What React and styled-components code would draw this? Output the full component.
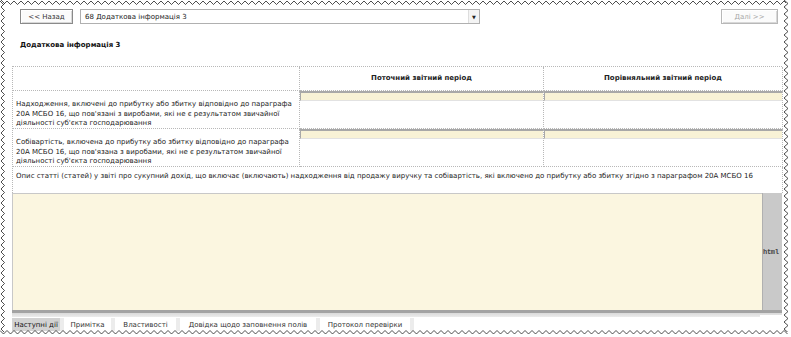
import React from "react";
import styled, { createGlobalStyle } from "styled-components";

const Global = createGlobalStyle`
  html, body { margin: 0; padding: 0; background: #fff; }
  * { box-sizing: border-box; }
`;

const FONT = `"DejaVu Sans", Verdana, Tahoma, sans-serif`;

const Page = styled.div`
  position: relative;
  width: 791px;
  height: 337px;
  overflow: hidden;
  background: #fff;
  font-family: ${FONT};
  font-size: 7px;
  color: #222;
  display: flex;
  flex-direction: column;
  padding: 9px 9px 0 12px;
`;

const Toolbar = styled.div`
  display: flex;
  align-items: center;
  height: 15px;
  padding: 0 4px 0 8px;
  gap: 7px;
`;

const NavButton = styled.div`
  width: ${(p) => p.$w}px;
  height: 15px;
  display: flex;
  align-items: center;
  justify-content: center;
  border: 1px solid ${(p) => (p.$disabled ? "#b8b8b8" : "#8a8a8a")};
  box-shadow: inset 1px 1px 0 #fff, inset -1px -1px 0 #d8d8d8;
  background: #fbfbfb;
  color: ${(p) => (p.$disabled ? "#a8a8a8" : "#333")};
  margin-left: ${(p) => (p.$push ? "auto" : "0")};
`;

const Select = styled.div`
  width: 400px;
  height: 15px;
  border: 1px solid #b0b0b0;
  display: flex;
  align-items: center;
  justify-content: space-between;
  padding-left: 4px;
  color: #222;
`;

const Arrow = styled.div`
  width: 11px;
  height: 13px;
  border-left: 1px solid #ddd;
  display: flex;
  align-items: center;
  justify-content: center;
  background: #f4f4f4;
  font-size: 5px;
  color: #222;
`;

const Title = styled.div`
  font-weight: bold;
  margin: 17px 0 0 8px;
  height: 10px;
  color: #111;
`;

const Table = styled.div`
  margin-top: 15px;
  width: 770px;
  display: grid;
  grid-template-columns: 287px 244px 239px;
  border-top: 1px dotted #b8b8b8;
  border-left: 1px dotted #b8b8b8;
`;

const Cell = styled.div`
  height: ${(p) => p.$h}px;
  border-right: 1px dotted #b8b8b8;
  border-bottom: 1px dotted #b8b8b8;
  display: flex;
  flex-direction: column;
  justify-content: ${(p) => (p.$top ? "flex-start" : "center")};
  align-items: ${(p) => (p.$center ? "center" : "flex-start")};
  font-weight: ${(p) => (p.$bold ? "bold" : "normal")};
  padding: ${(p) => (p.$pad ? p.$pad : "0 3px")};
  line-height: 9.5px;
  color: #222;
`;

const ValueCell = styled.div`
  height: ${(p) => p.$h}px;
  border-right: 1px dotted #b8b8b8;
  border-bottom: 1px dotted #b8b8b8;
`;

const Strip = styled.div`
  height: 10px;
  border-top: 2px solid #a8a8a8;
  border-left: 1px solid #a8a8a8;
  border-bottom: 1px solid #e2e2e2;
  background-color: #f8f2d6;
  background-image: radial-gradient(#efe6c0 0.5px, transparent 0.6px);
  background-size: 2px 2px;
`;

const WideCell = styled.div`
  grid-column: 1 / span 3;
  height: 26px;
  border-right: 1px dotted #b8b8b8;
  padding: 5px 3px 0 3px;
  color: #222;
  white-space: nowrap;
`;

const EditorRow = styled.div`
  display: flex;
  width: 770px;
  height: 117px;
`;

const Editor = styled.div`
  flex: 1;
  border-top: 1px solid #c8c8c8;
  border-left: 1px solid #c8c8c8;
  background-color: #fbf6e0;
  background-image: radial-gradient(#f0e8c6 0.5px, transparent 0.7px);
  background-size: 2px 2px;
`;

const SideBar = styled.div`
  width: 20px;
  background: #c9c9c9;
  border-left: 1px solid #b0b0b0;
  display: flex;
  align-items: center;
  padding-left: 0;
  font-family: "Liberation Mono", "DejaVu Sans Mono", monospace;
  font-weight: bold;
  font-size: 7px;
  letter-spacing: -0.3px;
  color: #444;
  white-space: nowrap;
`;

const BottomBar = styled.div`
  width: 770px;
  height: 3px;
  background: #a3a3a3;
`;

const BottomShade = styled.div`
  width: 770px;
  height: 4px;
  background: linear-gradient(#dadada, #ececec);
  display: flex;
  justify-content: flex-end;
`;

const ShadeGap = styled.div`
  width: 22px;
  height: 2px;
  margin-top: 2px;
  background: #fff;
`;

const Tabs = styled.div`
  display: flex;
  height: 13px;
  width: 770px;
  margin-top: 1px;
  background: #fff;
`;

const Tab = styled.div`
  width: ${(p) => p.$w}px;
  height: 13px;
  display: flex;
  align-items: center;
  justify-content: center;
  background: ${(p) => (p.$active ? "#d2d2d2" : "#fff")};
  border-right: 4px solid #ececec;
  color: ${(p) => (p.$active ? "#111" : "#333")};
  white-space: nowrap;
`;

const Zig = styled.svg`
  position: absolute;
  left: ${(p) => p.$x}px;
  top: ${(p) => p.$y}px;
  pointer-events: none;
`;

function zigH(len, y0, y1, step = 3.5) {
  const pts = [];
  let i = 0;
  for (let x = 0; x <= len + step; x += step, i++) pts.push(`${x},${i % 2 ? y1 : y0}`);
  return pts.join(" ");
}
function zigV(len, x0, x1, step = 3.5) {
  const pts = [];
  let i = 0;
  for (let y = 0; y <= len + step; y += step, i++) pts.push(`${i % 2 ? x1 : x0},${y}`);
  return pts.join(" ");
}

const Zigzags = () => (
  <>
    <Zig $x={0} $y={0} width="791" height="7">
      <rect x="0" y="0" width="791" height="2" fill="#fff" />
      <polyline points={zigH(791, 1, 4.5)} fill="none" stroke="#222" strokeWidth="0.8" />
    </Zig>
    <Zig $x={0} $y={0} width="7" height="337">
      <polyline points={zigV(332, 1, 4.5)} fill="none" stroke="#222" strokeWidth="0.8" />
    </Zig>
    <Zig $x={782} $y={0} width="9" height="337">
      <rect x="4" y="0" width="5" height="337" fill="#fff" />
      <polyline points={zigV(332, 2, 6)} fill="none" stroke="#222" strokeWidth="0.8" />
    </Zig>
    <Zig $x={0} $y={329} width="791" height="8">
      <rect x="0" y="3" width="791" height="5" fill="#fff" />
      <polyline points={zigH(786, 1.5, 5)} fill="none" stroke="#222" strokeWidth="0.8" />
    </Zig>
  </>
);

const rows = [
  "Надходження, включені до прибутку або збитку відповідно до параграфа 20А МСБО 16, що пов'язані з виробами, які не є результатом звичайної діяльності суб'єкта господарювання",
  "Собівартість, включена до прибутку або збитку відповідно до параграфа 20А МСБО 16, що пов'язана з виробами, які не є результатом звичайної діяльності суб'єкта господарювання",
];

const tabs = [
  ["Наступні дії", 52, true],
  ["Примітка", 51],
  ["Властивості", 65],
  ["Довідка щодо заповнення полів", 140],
  ["Протокол перевірки", 94],
];

export default function App() {
  return (
    <>
      <Global />
      <Page>
        <Toolbar>
          <NavButton $w={53}>&lt;&lt; Назад</NavButton>
          <Select>
            <span>68 Додаткова інформація 3</span>
            <Arrow>▼</Arrow>
          </Select>
          <NavButton $w={57} $disabled $push>Далі &gt;&gt;</NavButton>
        </Toolbar>
        <Title>Додаткова інформація 3</Title>
        <Table>
          <Cell $h={24} />
          <Cell $h={24} $bold $center>Поточний звітний період</Cell>
          <Cell $h={24} $bold $center>Порівняльний звітний період</Cell>
          {rows.map((t) => (
            <React.Fragment key={t}>
              <Cell $h={38} $top $pad="9px 6px 0 3px">{t}</Cell>
              <ValueCell $h={38}><Strip /></ValueCell>
              <ValueCell $h={38}><Strip /></ValueCell>
            </React.Fragment>
          ))}
          <WideCell>
            Опис статті (статей) у звіті про сукупний дохід, що включає (включають) надходження від продажу виручку та собівартість, які включено до прибутку або збитку згідно з параграфом 20А МСБО 16
          </WideCell>
        </Table>
        <EditorRow>
          <Editor />
          <SideBar>html</SideBar>
        </EditorRow>
        <BottomBar />
        <BottomShade><ShadeGap /></BottomShade>
        <Tabs>
          {tabs.map(([label, w, active]) => (
            <Tab key={label} $w={w} $active={active}>{label}</Tab>
          ))}
        </Tabs>
        <Zigzags />
      </Page>
    </>
  );
}
